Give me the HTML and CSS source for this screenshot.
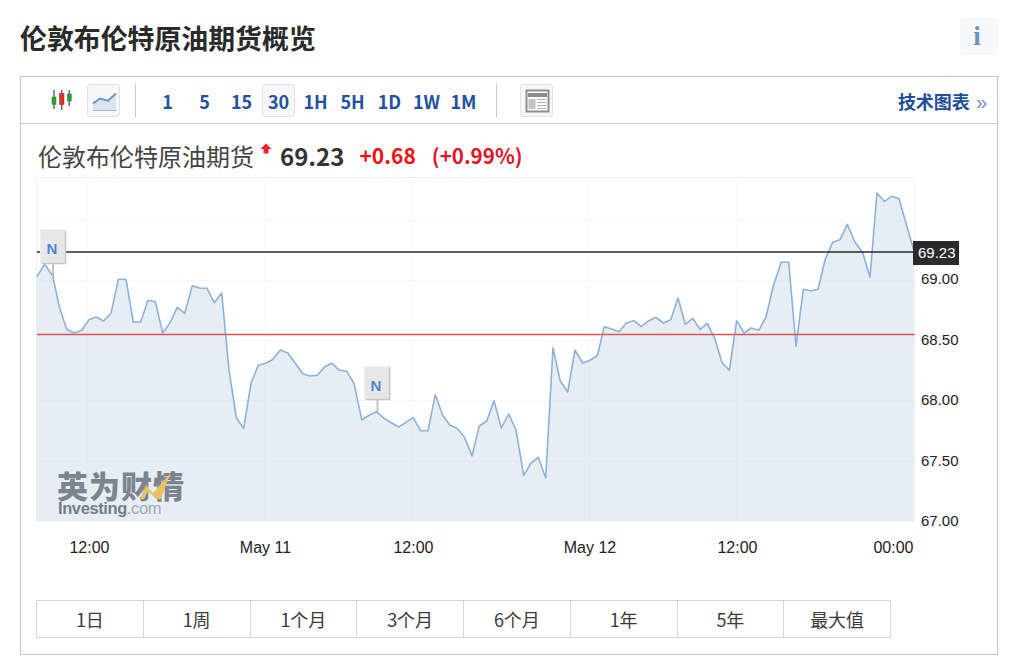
FILE: index.html
```html
<!DOCTYPE html>
<html lang="zh-CN">
<head>
<meta charset="utf-8">
<title>伦敦布伦特原油期货概览</title>
<link rel="stylesheet" href="styles.css">
</head>
<body>
<main class="page">
  <header class="page-head">
    <h1 class="page-title">伦敦布伦特原油期货概览</h1>
    <button class="info-btn" type="button">i</button>
  </header>
  <section class="panel">
    <nav class="toolbar">
      <span class="tool tool-candle">
        <svg class="tool-icon" viewBox="45 84 33 33">
          <path class="wick" d="M54 90V109M61.7 90V110M69.3 90V106"/>
          <rect class="candle-up" x="52" y="97" width="4" height="7.500"/>
          <rect class="candle-down" x="59.500" y="93.500" width="4.500" height="11"/>
          <rect class="candle-up" x="67.300" y="94" width="4" height="7"/>
        </svg>
      </span>
      <span class="tool tool-boxed">
        <svg class="tool-icon" viewBox="87 84 33 33">
          <path class="spark-fill" d="M93 104L100 98.500L108 100.700L116 93.500V110H93Z"/>
          <path class="spark-base" d="M92.500 110.500H116.500"/>
          <path class="spark-line" d="M93 103.500L100 98.500L108 100.700L116 93.500"/>
        </svg>
      </span>
      <span class="tool-sep"></span>
      <a class="tool">1</a>
      <a class="tool">5</a>
      <a class="tool">15</a>
      <a class="tool tool-active">30</a>
      <a class="tool">1H</a>
      <a class="tool">5H</a>
      <a class="tool">1D</a>
      <a class="tool">1W</a>
      <a class="tool">1M</a>
      <span class="tool-sep tool-sep-wide"></span>
      <span class="tool tool-boxed">
        <svg class="tool-icon" viewBox="520 84 33 33">
          <rect class="news-frame" x="526.500" y="90.500" width="22" height="21"/>
          <rect class="news-head" x="528" y="93" width="19" height="4"/>
          <rect class="news-pic" x="528.500" y="99" width="7" height="10"/>
          <path class="news-text" d="M537 99.500H546.500M537 102.500H546.500M537 105.500H546.500M537 108.500H546.500"/>
        </svg>
      </span>
      <a class="tech-link">技术图表<span class="tech-arrows">»</span></a>
    </nav>
    <div class="quote">
      <span class="quote-name">伦敦布伦特原油期货</span>
      <svg class="quote-arrow" viewBox="0 0 12 12"><path d="M6 0.500L11.500 6H8.500V10.500H3.500V6H0.500Z"/></svg>
      <span class="quote-price">69.23</span>
      <span class="quote-change">+0.68</span>
      <span class="quote-pct">(+0.99%)</span>
    </div>
    <svg class="chart" viewBox="21 170 976 420">
      <rect class="plot-frame" x="36.500" y="177.500" width="878.500" height="343.500"/>
      <path class="grid" d="M37 220.500H915M37 280.500H915M37 340.500H915M37 400.500H915M37 461.500H915M87.500 178V521M264.500 178V521M412.500 178V521M589.500 178V521M736.500 178V521"/>
      <path class="area" d="M36.700 276.700L44.700 264.300L52.700 276L59.300 306.700L66.700 329.300L74 333L81.700 330.300L89 319.700L96.300 317L103.700 321L111 313.300L118.300 279.300L126 279.300L133.300 322L140.700 322L148 300.300L155.300 301.700L162.700 333L170 322.700L177.300 307.300L184.700 313.300L192.300 285.700L199.700 288L207 288.300L214.300 302.700L221.700 293L229 370L236.300 417.700L243.700 428.300L251 383.300L258.300 365.300L265.700 363.300L273 359.300L280.300 350L287.700 353L295.300 363.300L302.700 373.700L310 376L317.300 375.300L324.700 366.700L332 363.300L339.300 370.300L346.700 371.300L354 383.300L361.700 419.700L369 415.300L376.700 411.700L384 418.300L391.300 422.700L398.700 427L406 422.300L413 417.700L420.700 430.700L428 430.700L435.300 394.700L442.700 415.300L450 425.300L457.300 428.300L464.700 437.700L472 456L479.300 426L486.700 421L494 400.700L501.300 428L508.700 414L516 430L523.700 475.300L531 463L538.300 457.300L545.700 478L553 347.700L560.300 381.300L567.700 392L575 350L582.700 363L590 360.300L597.300 355.700L604.300 326.700L611.700 329L619 331.700L626.300 323L633.700 320.700L641.300 326.700L648.700 320.700L656 317.300L663.300 323L670.700 319.700L678 298L685.300 324.300L692.700 318.300L700 329.300L707.300 323.300L714.700 338.300L722 362.700L729.300 370.300L736.700 320.700L744 333L751.300 328L758.700 330.300L766 317L773.300 285.700L781.300 262.300L788.700 262.300L796 346.300L803.300 289.300L810.700 290.700L818 289.300L825.300 259L832.700 242.300L840 239.700L847.300 224.300L854.700 241.700L862.700 252.700L870 277.300L877 193L884.300 201.300L891.700 196.300L899 198.700L906.300 224.300L914 251V521H36.700Z"/>
      <path class="line" d="M36.700 276.700L44.700 264.300L52.700 276L59.300 306.700L66.700 329.300L74 333L81.700 330.300L89 319.700L96.300 317L103.700 321L111 313.300L118.300 279.300L126 279.300L133.300 322L140.700 322L148 300.300L155.300 301.700L162.700 333L170 322.700L177.300 307.300L184.700 313.300L192.300 285.700L199.700 288L207 288.300L214.300 302.700L221.700 293L229 370L236.300 417.700L243.700 428.300L251 383.300L258.300 365.300L265.700 363.300L273 359.300L280.300 350L287.700 353L295.300 363.300L302.700 373.700L310 376L317.300 375.300L324.700 366.700L332 363.300L339.300 370.300L346.700 371.300L354 383.300L361.700 419.700L369 415.300L376.700 411.700L384 418.300L391.300 422.700L398.700 427L406 422.300L413 417.700L420.700 430.700L428 430.700L435.300 394.700L442.700 415.300L450 425.300L457.300 428.300L464.700 437.700L472 456L479.300 426L486.700 421L494 400.700L501.300 428L508.700 414L516 430L523.700 475.300L531 463L538.300 457.300L545.700 478L553 347.700L560.300 381.300L567.700 392L575 350L582.700 363L590 360.300L597.300 355.700L604.300 326.700L611.700 329L619 331.700L626.300 323L633.700 320.700L641.300 326.700L648.700 320.700L656 317.300L663.300 323L670.700 319.700L678 298L685.300 324.300L692.700 318.300L700 329.300L707.300 323.300L714.700 338.300L722 362.700L729.300 370.300L736.700 320.700L744 333L751.300 328L758.700 330.300L766 317L773.300 285.700L781.300 262.300L788.700 262.300L796 346.300L803.300 289.300L810.700 290.700L818 289.300L825.300 259L832.700 242.300L840 239.700L847.300 224.300L854.700 241.700L862.700 252.700L870 277.300L877 193L884.300 201.300L891.700 196.300L899 198.700L906.300 224.300L914 251"/>
      <path class="line-prev" d="M37 334.500H915"/>
      <path class="line-last" d="M37 252H915"/>

      <g class="logo">
        <text class="logo-cn" x="57" y="498">英为财情</text>
        <path class="logo-mark" d="M140 499L146 485L153 493L170.700 472.700L160.700 499H156L148 491L144 499Z"/>
        <text class="logo-en" x="58" y="514">Investing<tspan class="logo-com">.com</tspan></text>
      </g>

      <g class="flag">
        <path class="flag-stem" d="M53 262V277"/>
        <rect class="flag-box" x="40.500" y="229.500" width="25" height="34"/>
        <path class="flag-edge" d="M65.500 231V263.500H42"/>
        <text class="flag-text" x="52" y="254">N</text>
      </g>
      <g class="flag">
        <path class="flag-stem" d="M377.500 398V411"/>
        <rect class="flag-box" x="364.500" y="366.500" width="26" height="33"/>
        <path class="flag-edge" d="M389.500 368V399.500H366"/>
        <text class="flag-text" x="376" y="391">N</text>
      </g>

      <text class="axis-y" x="921" y="283.500">69.00</text>
      <text class="axis-y" x="921" y="345">68.50</text>
      <text class="axis-y" x="921" y="405">68.00</text>
      <text class="axis-y" x="921" y="466">67.50</text>
      <text class="axis-y" x="921" y="526">67.00</text>

      <rect class="price-tag" x="913" y="241" width="46" height="24"/>
      <text class="price-tag-text" x="918" y="258">69.23</text>

      <text class="axis-x" x="89.500" y="553">12:00</text>
      <text class="axis-x" x="265.500" y="553">May 11</text>
      <text class="axis-x" x="413.500" y="553">12:00</text>
      <text class="axis-x" x="590" y="553">May 12</text>
      <text class="axis-x" x="737.500" y="553">12:00</text>
      <text class="axis-x" x="893.500" y="553">00:00</text>
    </svg>
    <div class="ranges">
      <a class="range">1日</a>
      <a class="range">1周</a>
      <a class="range">1个月</a>
      <a class="range">3个月</a>
      <a class="range">6个月</a>
      <a class="range">1年</a>
      <a class="range">5年</a>
      <a class="range">最大值</a>
    </div>
  </section>
</main>
</body>
</html>
```
FILE: styles.css
```css
* { box-sizing: border-box; }

html, body { margin: 0; padding: 0; background: #fff; }

body {
  font-family: "Noto Sans CJK SC", "Noto Sans", sans-serif;
  color: #333;
}

.page { width: 1016px; height: 669px; padding: 0 18px 0 20px; overflow: hidden; }

.page-head {
  display: flex;
  justify-content: space-between;
  align-items: flex-start;
  height: 76px;
  padding-top: 18px;
}

.page-title {
  margin: 0;
  font-size: 26.900px;
  line-height: 40px;
  font-weight: 700;
  color: #2a2a2a;
}

.info-btn {
  width: 38px;
  height: 37px;
  padding: 0 4px 0 0;
  border: 0;
  border-radius: 3px;
  background: #f6f8f9;
  color: #6a94c4;
  font-family: "Liberation Serif", serif;
  font-size: 27px;
  font-weight: 700;
  line-height: 37px;
  text-align: center;
}

.panel {
  width: 978px;
  height: 579px;
  padding-bottom: 16px;
  border: 1px solid #c6c6c6;
}

.toolbar {
  display: flex;
  align-items: flex-start;
  gap: 4px;
  height: 47px;
  padding: 7px 9px 0 24px;
  border-bottom: 1px solid #c9c9c9;
}

.tool {
  display: flex;
  align-items: center;
  justify-content: center;
  flex: none;
  width: 33px;
  height: 33px;
  border: 1px solid transparent;
  border-radius: 3px;
  color: #1f52a0;
  font-size: 18px;
  font-weight: 700;
}

.tool-candle { margin-right: 5px; }

.tool-boxed,
.tool-active {
  border-color: #e2e2e2;
  background: #f7f7f7;
}

.tool-icon { display: block; flex: none; width: 33px; height: 33px; }

.tool-sep {
  flex: none;
  width: 1px;
  height: 33px;
  margin: 0 11px;
  background: #c9c9c9;
}

.tool-sep-wide { margin: 0 19px 0 12px; }

.wick { stroke: #5a6b80; stroke-width: 1.500; fill: none; }
.candle-up { fill: #2fa12f; stroke: #1c8a1c; stroke-width: 0.500; }
.candle-down { fill: #d83232; stroke: #b52020; stroke-width: 0.500; }

.spark-fill { fill: #dbe5f1; }
.spark-base { stroke: #a9b9cf; stroke-width: 1; fill: none; }
.spark-line { stroke: #6b95c9; stroke-width: 2; fill: none; }

.news-frame { fill: #fff; stroke: #8d8d8d; stroke-width: 2; }
.news-head { fill: #8d8d8d; }
.news-pic { fill: #c4c4c4; }
.news-text { stroke: #b5b5b5; stroke-width: 1; fill: none; }

.tech-link {
  margin: 0 1px 0 auto;
  color: #1f4f99;
  font-size: 18px;
  font-weight: 700;
  line-height: 34px;
}

.tech-arrows {
  margin-left: 6px;
  color: #6c8fc6;
  font-family: "Liberation Sans", sans-serif;
  font-weight: 400;
  font-size: 20px;
}

.quote {
  display: flex;
  align-items: center;
  height: 46px;
  padding: 16px 0 0 17px;
}

.quote-name { font-size: 24px; color: #444; }

.quote-arrow {
  flex: none;
  width: 12px;
  height: 12px;
  margin: -13px 8px 0 6px;
  fill: #f2222a;
}

.quote-price { font-size: 24px; font-weight: 700; color: #333; margin-right: 15px; }

.quote-change { font-size: 21px; font-weight: 700; color: #f01010; margin-right: 16px; }

.quote-pct { font-size: 20.600px; font-weight: 700; color: #e0142a; }

.chart { display: block; width: 976px; height: 420px; }

.plot-frame { fill: #fff; stroke: #eff1f6; stroke-width: 1; }
.grid { stroke: #f6f7fa; stroke-width: 1; fill: none; }
.area { fill: #c9d9e8; fill-opacity: 0.46; }
.line { stroke: #8bb2de; stroke-width: 1.600; fill: none; stroke-linejoin: round; }
.line-prev { stroke: #e2504f; stroke-width: 1.300; fill: none; }
.line-last { stroke: #2a2a2a; stroke-width: 1.500; fill: none; }

.logo-cn {
  font-family: "Noto Sans CJK SC", sans-serif;
  font-size: 31px;
  font-weight: 900;
  letter-spacing: 1px;
  fill: #7c858e;
}

.logo-en {
  font-family: "Liberation Sans", sans-serif;
  font-size: 16.500px;
  font-weight: 700;
  letter-spacing: -0.400px;
  fill: #737c85;
}

.logo-com { font-weight: 400; fill: #a2a9b1; }

.logo-mark { fill: #e9c063; }

.flag-stem { stroke: #c2c2c2; stroke-width: 2; fill: none; }
.flag-box { fill: #e7e7e7; stroke: #efefef; stroke-width: 1; }
.flag-edge { stroke: #c6c6c6; stroke-width: 1.500; fill: none; }

.flag-text {
  font-family: "Liberation Sans", sans-serif;
  font-size: 15px;
  font-weight: 700;
  text-anchor: middle;
  fill: #4a86d3;
}

.axis-y,
.axis-x,
.price-tag-text {
  font-family: "Liberation Sans", sans-serif;
  fill: #222;
}

.axis-y { font-size: 15px; }
.axis-x { font-size: 16px; text-anchor: middle; }

.price-tag { fill: #2b2b2b; }
.price-tag-text { font-size: 15px; fill: #fff; }

.ranges {
  display: flex;
  width: 855px;
  height: 38px;
  margin: 10px 0 0 15px;
  border: 1px solid #d6d6d6;
}

.range {
  flex: 1 1 0;
  border-right: 1px solid #d6d6d6;
  color: #3a3a3a;
  font-size: 18px;
  line-height: 36px;
  text-align: center;
}

.range:last-child { border-right: 0; }
```
